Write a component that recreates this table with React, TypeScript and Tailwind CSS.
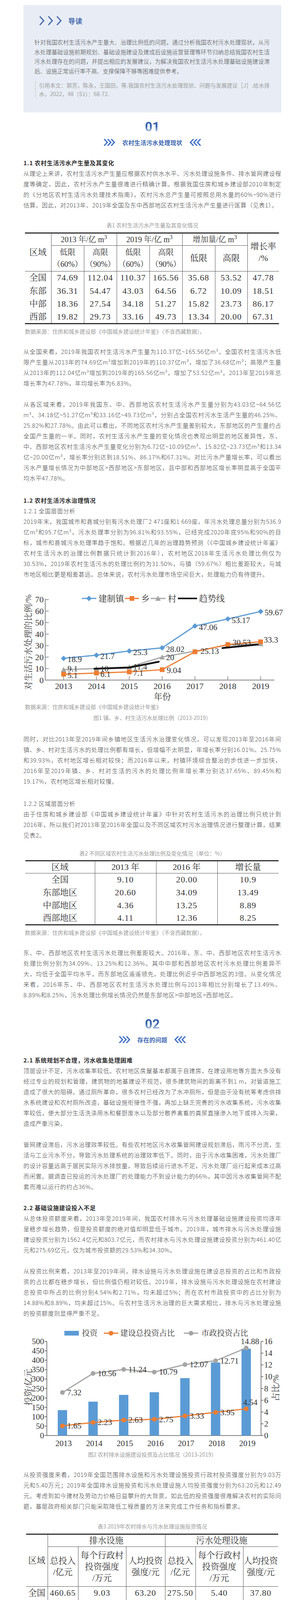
import React from 'react'

const body = "text-justify text-[15px] font-light leading-[27px] tracking-[0.7px] text-[#3f3f3f]"
const serifCls = "font-['Liberation_Serif','Noto_Serif_CJK_SC','Noto_Sans_CJK_SC',serif]"
const tableCls = `table-fixed border-collapse border-y-[3px] border-[#333] text-center text-[22px] leading-[30px] text-[#333] [&_td]:p-0 ${serifCls}`
const SVG_SERIF = "Liberation Serif, Noto Serif CJK SC, Noto Sans CJK SC, serif"
const BLUE = '#5b9bd5'
const ORANGE = '#ed7d31'
const GRAY = '#a5a5a5'
const YEARS = [2013, 2014, 2015, 2016, 2017, 2018, 2019]

function Chev({ left }: { left?: boolean }) {
  return (
    <svg width="32" height="21" viewBox="0 0 32 21" className={left ? 'block -scale-x-100' : 'block'}>
      {[2, 11, 20].map((x) => (
        <polyline key={x} points={`${x},2 ${x + 8},10.5 ${x},19`} fill="none" stroke="#3f6fc6" strokeWidth="3.2" />
      ))}
    </svg>
  )
}

// margins collapse with the paragraph above, so the top gap is set per section
function SectionHead({ num, title, className }: { num: string; title: string; className: string }) {
  return (
    <div className={`flex flex-col items-center ${className}`}>
      <div className="h-[36px] bg-linear-to-b from-[#3461a9] from-45% to-[#dfe7f4] to-95% bg-clip-text font-['Roboto',sans-serif] text-[33px] font-bold leading-[36px] text-transparent">
        {num}
      </div>
      <div className="mt-[11px] flex h-[22px] items-center">
        <Chev />
        <span className="mx-[16px] text-[15px] font-bold tracking-[0.4px] text-[#3d68b0]">{title}</span>
        <Chev left />
      </div>
    </div>
  )
}

function H({ children, className = '' }: { children: React.ReactNode; className?: string }) {
  return <h3 className={`text-[15px] font-bold leading-[27px] tracking-[0.7px] text-[#2f2f2f] ${className}`}>{children}</h3>
}

function P({ children, className = 'mb-[27px]' }: { children: React.ReactNode; className?: string }) {
  return <p className={`${body} ${className}`}>{children}</p>
}

function Caption({ children, className = '' }: { children: React.ReactNode; className?: string }) {
  return <p className={`text-center text-[14px] leading-[22px] text-[#9b9b9b] ${className}`}>{children}</p>
}

function Source({ children, className = '' }: { children: React.ReactNode; className?: string }) {
  return <p className={`ml-[4px] text-[14px] leading-[22px] text-[#9b9b9b] ${className}`}>{children}</p>
}

function Chart1() {
  const X = (i: number) => 163 + 84.17 * i
  const Y = (v: number) => 1741 - v * 2.943
  const town = [18.9, 21.7, 25.3, 28.02, 47.06, 53.17, 59.67]
  const xiang = [5.1, 6.1, 7.1, 9.04, 24.6, 30.9, 33.3]
  const cun = [9.1, 10, 11.4, 20, 25.13, 30.53, 31.5]
  const pts = (a: number[]) => a.map((v, i) => `${X(i)},${Y(v)}`).join(' ')
  const townLab = ['18.9', '21.7', '25.3', '28.02', '47.06', '53.17', '59.67']
  const xiangLab: [string, number, number][] = [['5.1', 10, 3], ['6.1', 10, 3], ['7.1', 10, 3], ['9.04', 12, 2], ['', 0, 0], ['', 0, 0], ['33.3', 8, -5]]
  const cunLab: [string, number, number][] = [['9.1', 10, -2], ['10', 10, 0], ['11.4', 10, 0], ['20', 10, 1], ['25.13', 14, 0], ['30.53', 12, -6], ['', 0, 0]]
  return (
    <svg width="661" height="288" viewBox="60 1510 661 288" className="block overflow-visible" fontFamily={SVG_SERIF} fill="#333">
      <text transform="translate(72,1644) rotate(-90)" textAnchor="middle" dominantBaseline="central" fontSize="22" fill="#404040">
        对生活污水处理的比例/%
      </text>
      {/* legend */}
      <line x1="210" y1="1532" x2="247" y2="1532" stroke={BLUE} strokeWidth="3" />
      <polygon points="228,1525 235,1532 228,1539 221,1532" fill={BLUE} />
      <text x="252" y="1532" dominantBaseline="central" fontSize="22">建制镇</text>
      <line x1="320" y1="1532" x2="356" y2="1532" stroke={ORANGE} strokeWidth="3" />
      <rect x="332" y="1526" width="12" height="12" fill={ORANGE} />
      <text x="362" y="1532" dominantBaseline="central" fontSize="22">乡</text>
      <line x1="386" y1="1532" x2="424" y2="1532" stroke={GRAY} strokeWidth="3" />
      <polygon points="405,1525 412,1538 398,1538" fill={GRAY} />
      <text x="430" y="1532" dominantBaseline="central" fontSize="22">村</text>
      <line x1="456" y1="1532" x2="505" y2="1532" stroke="#111" strokeWidth="4" />
      <text x="510" y="1532" dominantBaseline="central" fontSize="22">趋势线</text>
      {/* axes */}
      <line x1="116" y1="1533" x2="116" y2="1742" stroke="#999" strokeWidth="2.5" />
      <line x1="115" y1="1741" x2="703" y2="1741" stroke="#999" strokeWidth="2.5" />
      {[0, 10, 20, 30, 40, 50, 60, 70].map((v) => (
        <g key={v}>
          <line x1="116" y1={Y(v)} x2="125" y2={Y(v)} stroke="#999" strokeWidth="2" />
          <text x="112" y={Y(v)} textAnchor="end" dominantBaseline="central" fontSize="22">{v}</text>
        </g>
      ))}
      {YEARS.map((y, i) => (
        <g key={y}>
          <line x1={X(i)} y1="1731" x2={X(i)} y2="1741" stroke="#999" strokeWidth="2" />
          <text x={X(i)} y="1756" textAnchor="middle" dominantBaseline="central" fontSize="22">{y}</text>
        </g>
      ))}
      <text x="416" y="1783" textAnchor="middle" dominantBaseline="central" fontSize="22">年份</text>
      {/* series */}
      <polyline points={pts(cun)} fill="none" stroke={GRAY} strokeWidth="3" />
      {cun.map((v, i) => (
        <polygon key={i} points={`${X(i)},${Y(v) - 7} ${X(i) + 7},${Y(v) + 6} ${X(i) - 7},${Y(v) + 6}`} fill={GRAY} />
      ))}
      <polyline points={pts(xiang)} fill="none" stroke={ORANGE} strokeWidth="3" />
      {xiang.map((v, i) => (
        <rect key={i} x={X(i) - 6} y={Y(v) - 6} width="12" height="12" fill={ORANGE} />
      ))}
      <polyline points={pts(town)} fill="none" stroke={BLUE} strokeWidth="3" />
      {town.map((v, i) => (
        <polygon key={i} points={`${X(i)},${Y(v) - 7} ${X(i) + 7},${Y(v)} ${X(i)},${Y(v) + 7} ${X(i) - 7},${Y(v)}`} fill={BLUE} />
      ))}
      <polyline points="242,1712 331,1709 407,1694" fill="none" stroke="#111" strokeWidth="4.5" strokeLinecap="round" />
      <polyline points="570,1659 661,1650" fill="none" stroke="#111" strokeWidth="4.5" strokeLinecap="round" />
      {town.map((v, i) => (
        <text key={i} x={X(i) + 10} y={Y(v) + 3} dominantBaseline="central" fontSize="21">{townLab[i]}</text>
      ))}
      {cun.map((v, i) =>
        cunLab[i][0] ? (
          <text key={i} x={X(i) + cunLab[i][1]} y={Y(v) + cunLab[i][2]} dominantBaseline="central" fontSize="21">{cunLab[i][0]}</text>
        ) : null,
      )}
      {xiang.map((v, i) =>
        xiangLab[i][0] ? (
          <text key={i} x={X(i) + xiangLab[i][1]} y={Y(v) + xiangLab[i][2]} dominantBaseline="central" fontSize="21">{xiangLab[i][0]}</text>
        ) : null,
      )}
    </svg>
  )
}

type BL = {
  top: number
  height: number
  lx: number
  rx: number
  y0: number
  yT: number
  lMax: number
  c0: number
  step: number
  shift: number
  bars: number[]
  gray: number[]
  orange: number[]
  grayDots: boolean
  grayLab: [number, number][]
  orangeLab: [number, number][]
  legendY: number
  lg: { rect: number; t1: number; o: number; t2: number; g: number; t3: number }
  ltitle: [number, number]
  rtitle: [number, number]
  xlabY: number
}

function BarLine(p: BL) {
  const C = (i: number) => p.c0 + p.step * i
  const YL = (v: number) => p.y0 - (v * (p.y0 - p.yT)) / p.lMax
  const YR = (v: number) => p.y0 - (v * (p.y0 - p.yT)) / 16
  const lt: number[] = []
  for (let v = 0; v <= p.lMax; v += 50) lt.push(v)
  const rt = [0, 2, 4, 6, 8, 10, 12, 14, 16]
  const fmt = (v: number) => v.toFixed(2)
  return (
    <svg width="661" height={p.height} viewBox={`60 ${p.top} 661 ${p.height}`} className="block overflow-visible" fontFamily={SVG_SERIF} fill="#333">
      {/* legend */}
      <rect x={p.lg.rect} y={p.legendY - 6} width="37" height="12" fill={BLUE} />
      <text x={p.lg.t1} y={p.legendY} dominantBaseline="central" fontSize="20">投资</text>
      <line x1={p.lg.o} y1={p.legendY} x2={p.lg.o + 37} y2={p.legendY} stroke={ORANGE} strokeWidth="3" />
      <circle cx={p.lg.o + 18.5} cy={p.legendY} r="6" fill={ORANGE} />
      <text x={p.lg.t2} y={p.legendY} dominantBaseline="central" fontSize="20">建设总投资占比</text>
      <line x1={p.lg.g} y1={p.legendY} x2={p.lg.g + 37} y2={p.legendY} stroke={GRAY} strokeWidth="3" />
      <circle cx={p.lg.g + 18.5} cy={p.legendY} r="6" fill={GRAY} />
      <text x={p.lg.t3} y={p.legendY} dominantBaseline="central" fontSize="20">市政投资占比</text>
      {/* axis titles */}
      <text transform={`translate(${p.ltitle[0]},${p.ltitle[1]}) rotate(-90)`} textAnchor="middle" dominantBaseline="central" fontSize="22">投资/亿元</text>
      <text transform={`translate(${p.rtitle[0]},${p.rtitle[1]}) rotate(-90)`} textAnchor="middle" dominantBaseline="central" fontSize="22">占比/%</text>
      {/* axes */}
      <line x1={p.lx} y1={p.yT} x2={p.lx} y2={p.y0} stroke="#555" strokeWidth="1.5" />
      <line x1={p.rx} y1={p.yT} x2={p.rx} y2={p.y0} stroke="#555" strokeWidth="1.5" />
      <line x1={p.lx} y1={p.y0} x2={p.rx} y2={p.y0} stroke="#555" strokeWidth="1.5" />
      {lt.map((v) => (
        <g key={v}>
          <line x1={p.lx - 6} y1={YL(v)} x2={p.lx} y2={YL(v)} stroke="#555" strokeWidth="1.5" />
          <text x={p.lx - 7} y={YL(v)} textAnchor="end" dominantBaseline="central" fontSize="21">{v}</text>
        </g>
      ))}
      {rt.map((v) => (
        <g key={v}>
          <line x1={p.rx} y1={YR(v)} x2={p.rx + 6} y2={YR(v)} stroke="#555" strokeWidth="1.5" />
          <text x={p.rx + 8} y={YR(v)} dominantBaseline="central" fontSize="21">{v}</text>
        </g>
      ))}
      {p.bars.map((v, i) => (
        <rect key={i} x={C(i) - 12} y={YL(v)} width="24" height={p.y0 - YL(v)} fill={BLUE} />
      ))}
      {YEARS.map((y, i) => (
        <text key={y} x={C(i) + p.shift} y={p.xlabY} textAnchor="middle" dominantBaseline="central" fontSize="21">{y}</text>
      ))}
      <polyline points={p.gray.map((v, i) => `${C(i)},${YR(v)}`).join(' ')} fill="none" stroke={GRAY} strokeWidth="3" />
      {p.grayDots && p.gray.map((v, i) => <circle key={i} cx={C(i)} cy={YR(v)} r="6" fill={GRAY} />)}
      <polyline points={p.orange.map((v, i) => `${C(i)},${YR(v)}`).join(' ')} fill="none" stroke={ORANGE} strokeWidth="3" />
      {p.orange.map((v, i) => (
        <circle key={i} cx={C(i)} cy={YR(v)} r="6" fill={ORANGE} />
      ))}
      {p.gray.map((v, i) => (
        <text key={i} x={C(i) + p.grayLab[i][0]} y={YR(v) + p.grayLab[i][1]} dominantBaseline="central" fontSize="21">{fmt(v)}</text>
      ))}
      {p.orange.map((v, i) => (
        <text key={i} x={C(i) + p.orangeLab[i][0]} y={YR(v) + p.orangeLab[i][1]} dominantBaseline="central" fontSize="21">{fmt(v)}</text>
      ))}
    </svg>
  )
}

const td = 'border-l border-[#555]'

function Table1() {
  const rows = [
    ['全国', '74.69', '112.04', '110.37', '165.56', '35.68', '53.52', '47.78'],
    ['东部', '36.31', '54.47', '43.03', '64.56', '6.72', '10.09', '18.51'],
    ['中部', '18.36', '27.54', '34.18', '51.27', '15.82', '23.73', '86.17'],
    ['西部', '19.82', '29.73', '33.16', '49.73', '13.34', '20.00', '67.31'],
  ]
  return (
    <table className={`ml-[4px] mt-[8px] w-[651px] ${tableCls}`}>
      <colgroup>
        <col className="w-[67px]" />
        <col className="w-[84px]" />
        <col className="w-[84px]" />
        <col className="w-[84px]" />
        <col className="w-[84px]" />
        <col className="w-[84px]" />
        <col className="w-[83px]" />
        <col className="w-[81px]" />
      </colgroup>
      <tbody>
        <tr className="h-[32px]">
          <td rowSpan={2} className="border-b border-[#555]">区域</td>
          <td colSpan={2} className={`${td} border-b text-[20px]`}>2013 年/亿 m<sup>3</sup></td>
          <td colSpan={2} className={`${td} border-b text-[20px]`}>2019 年/亿 m<sup>3</sup></td>
          <td colSpan={2} className={`${td} border-b text-[20px]`}>增加量/亿 m<sup>3</sup></td>
          <td rowSpan={2} className={`${td} border-b`}>增长率<br />/%</td>
        </tr>
        <tr className="h-[66px] text-[20px]">
          <td className={`${td} border-b`}>低限<br />（60%）</td>
          <td className={`${td} border-b`}>高限<br />（90%）</td>
          <td className={`${td} border-b`}>低限<br />（60%）</td>
          <td className={`${td} border-b`}>高限<br />（90%）</td>
          <td className={`${td} border-b text-[22px]`}>低限</td>
          <td className={`${td} border-b text-[22px]`}>高限</td>
        </tr>
        {rows.map((r) => (
          <tr key={r[0]} className="h-[33.5px]">
            {r.map((c, i) => (
              <td key={i} className={i ? `${td} tracking-[1px]` : ''}>{c}</td>
            ))}
          </tr>
        ))}
      </tbody>
    </table>
  )
}

function Table2() {
  const rows = [
    ['全国', '9.10', '20.00', '10.9'],
    ['东部地区', '20.60', '34.09', '13.49'],
    ['中部地区', '4.36', '13.25', '8.89'],
    ['西部地区', '4.11', '12.36', '8.25'],
  ]
  return (
    <table className={`ml-[5px] mt-[7px] w-[649px] ${tableCls}`}>
      <colgroup>
        <col className="w-[178px]" />
        <col className="w-[157px]" />
        <col className="w-[157px]" />
        <col className="w-[157px]" />
      </colgroup>
      <tbody>
        <tr className="h-[32px]">
          <td className="border-b border-[#555]">区域</td>
          <td className={`${td} border-b`}>2013 年</td>
          <td className={`${td} border-b`}>2016 年</td>
          <td className={`${td} border-b`}>增长量</td>
        </tr>
        {rows.map((r) => (
          <tr key={r[0]} className="h-[33px]">
            {r.map((c, i) => (
              <td key={i} className={i ? `${td} tracking-[1px]` : ''}>{c}</td>
            ))}
          </tr>
        ))}
      </tbody>
    </table>
  )
}

function Table3() {
  const rows = [
    ['全国', '460.65', '9.03', '63.20', '275.50', '5.40', '37.80'],
    ['东部', '277.05', '14.25', '112.25', '187.61', '9.65', '76.02'],
    ['中部', '92.62', '5.74', '37.67', '43.73', '2.71', '17.78'],
    ['西部', '88.71', '5.82', '37.68', '43.93', '2.88', '18.66'],
  ]
  const hd = `${td} border-b leading-[29px]`
  return (
    <table className={`ml-[7px] mt-[8px] w-[646px] ${tableCls}`}>
      <colgroup>
        <col className="w-[55px]" />
        <col className="w-[78px]" />
        <col className="w-[123px]" />
        <col className="w-[100px]" />
        <col className="w-[78px]" />
        <col className="w-[122px]" />
        <col className="w-[90px]" />
      </colgroup>
      <tbody>
        <tr className="h-[31px]">
          <td rowSpan={2} className="border-b border-[#555]">区域</td>
          <td colSpan={3} className={`${td} border-b`}>排水设施</td>
          <td colSpan={3} className={`${td} border-b`}>污水处理设施</td>
        </tr>
        <tr className="h-[102px]">
          <td className={hd}>总投入<br />/亿元</td>
          <td className={hd}>每个行政村<br />投资强度<br />/万元</td>
          <td className={hd}>人均投资<br />强度/元</td>
          <td className={hd}>总投入<br />/亿元</td>
          <td className={hd}>每个行政村<br />投资强度<br />/万元</td>
          <td className={hd}>人均投资<br />强度/元</td>
        </tr>
        {rows.map((r) => (
          <tr key={r[0]} className="h-[33.3px]">
            {r.map((c, i) => (
              <td key={i} className={i ? `${td} tracking-[1px]` : ''}>{c}</td>
            ))}
          </tr>
        ))}
      </tbody>
    </table>
  )
}

const T = {
  p11: '从理论上来讲，农村生活污水产生量应根据农村供水水平、污水处理设施条件、排水管网建设程度等确定，因此，农村污水产生量很难进行精确计算。根据我国住房和城乡建设部2010年制定的《分地区农村生活污水处理技术指南》，农村污水总产生量可按照总用水量的60%~90%进行估算。因此，对2013年、2019年全国及东中西部地区农村生活污水产生量进行匡算（见表1）。',
  p12: '从全国来看，2019年我国农村生活污水产生量为110.37亿~165.56亿m³。全国农村生活污水低限产生量从2013年的74.69亿m³增加到2019年的110.37亿m³，增加了36.68亿m³；高限产生量从2013年的112.04亿m³增加到2019年的165.56亿m³，增加了53.52亿m³。2013年至2019年总增长率为47.78%，年均增长率为6.83%。',
  p13: '从各区域来看，2019年我国东、中、西部地区农村生活污水产生量分别为43.03亿~64.56亿m³、34.18亿~51.27亿m³和33.16亿~49.73亿m³，分别占全国农村污水生活产生量的46.25%、25.82%和27.78%。由此可以看出，不同地区农村污水产生量差别较大，东部地区的产生量约占全国产生量的一半。同时，农村生活污水产生量的变化情况也表现出明显的地区差异性，东、中、西部地区农村生活污水产生量变化分别为6.72亿~10.09亿m³、15.82亿~23.73亿m³和13.34亿~20.00亿m³，增长率分别达到18.51%、86.17%和67.31%。对比污水产量增长率，可以看出污水产量增长情况为中部地区>西部地区>东部地区，且中部和西部地区增长率明显高于全国平均水平47.78%。',
  p14: '2019年末，我国城市和县城分别有污水处理厂2 471座和1 669座，年污水处理总量分别为536.9亿m³和95.7亿m³，污水处理率分别为96.81%和93.55%，已经完成2020年底95%和90%的目标，城市和县城污水处理率趋于饱和。根据近几年的治理趋势预测（《中国城乡建设统计年鉴》农村生活污水的治理比例数据只统计到2016年），农村地区2018年生活污水处理比例仅为30.53%，2019年农村生活污水的处理比例约为31.50%，与镇（59.67%）相比差距较大，与城市地区相比更是相差甚远。总体来说，农村污水处理市场空间巨大，处理能力仍有待提升。',
  p15: '同时，对比2013年至2019年间乡镇地区生活污水治理变化情况，可以发现2013年至2016年间镇、乡、村对生活污水的处理比例都有增长，但增幅不太明显，年增长率分别16.01%、25.75%和39.93%，农村地区增长相对较快；而2016年以来，村镇环境综合整治的步伐进一步加快，2016年至2019年镇、乡、村对生活的污水的处理比例年增长率分别达37.65%、89.45%和19.17%，农村地区增长相对较慢。',
  p16: '由于住房和城乡建设部《中国城乡建设统计年鉴》中针对农村生活污水的治理比例只统计到2016年，所以我们对2013年至2016年全国以及不同区域农村污水治理情况进行整理计算，结果见表2。',
  p17: '东、中、西部地区农村生活污水处理比例差距较大。2016年，东、中、西部地区农村生活污水处理比例分别为34.09%、13.25%和12.36%。其中中部和西部地区农村污水处理比例差异不大，均低于全国平均水平，而东部地区遥遥领先，处理比例近乎中西部地区的3倍。从变化情况来看，2016年东、中、西部地区农村生活污水处理比例与2013年相比分别增长了13.49%、8.89%和8.25%，污水处理比例增长情况仍然是东部地区>中部地区>西部地区。',
  p21: '顶层设计不足，污水收集率较低。农村地区房屋基本都属于自建房，在建设用地等方面大多没有经过专业的规划和管理，建筑物的地基建设不规范，很多建筑物间的距离不到1 m，对管道施工造成了很大的阻碍。通过厕所革命，很多农村已经改为了水冲厕所，但是由于没有统筹考虑供排水系统建设和农村厕所改造，基础设施衔接性不强，再加上缺乏完善的污水收集系统，污水收集率较低，使大部分生活洗涤用水和餐厨废水以及部分散养禽畜的粪尿直接渗入地下或排入沟渠，造成严重污染。',
  p22: '管网建设滞后，污水治理效率较低。有些农村地区污水收集管网建设规划滞后，雨污不分流，生活与工业污水不分，导致污水处理系统的治理效率低下。同时，由于污水收集困难，污水处理厂的设计容量远高于居民实际污水排放量，导致后续运行进水不足，污水处理厂运行起来成本过高而闲置。据调查已投运的污水处理厂的处理能力不到设计能力的66%，其中因污水收集管网不配套而难以运行的约占36%。',
  p23: '从总体投资额度来看，2013年至2019年间，我国农村排水与污水处理基础设施建设投资均逐年呈稳步增长趋势，但是投资额度的绝对值却明显低于城市。2019年，城市排水与污水处理设施建设投资分别为1562.4亿元和803.7亿元，而农村排水与污水处理设施建设投资分别为461.40亿元和275.69亿元，仅为城市投资额的29.53%和34.30%。',
  p24: '从投资比例来看，2013年至2019年间，排水设施与污水处理设施在建设总投资的占比和市政投资的占比都在稳步增长，但比例值仍相对较低。2019年，排水设施与污水处理设施在农村建设总投资中所占的比例分别4.54%和2.71%，均未超过5%；而在农村市政投资中的占比分别为14.88%和8.89%，均未超过15%。与农村生活污水治理的巨大需求相比，排水与污水处理设施的投资额度则显得严重不足。',
  p25: '从投资强度来看，2019年全国范围排水设施和污水处理设施投资行政村投资强度分别为9.03万元和5.40万元；2019年全国排水设施投资和污水处理设施人均投资强度分别为63.20元和12.49元。考虑到如今建材及劳动力价格日益攀升的大背景，如此低的投资强度很难解决农村的实际问题，基层政府相关部门只能采取降低工程质量的方法来完成工作任务和指标要求。',
  p26: '我国农村排水与污水处理基础设施的建设资金主要来源于国家和地方财政支持，而运营维护资金多以地方财政自筹为主。许多地区在政府出资建设基础设施后，由于农村难以承担运行维护费用，导致很多农村地区出现“建得起、运行不起”的尴尬局面，污水处理设施逐渐被停用。考虑农村的经济发展水平，缺乏专业的运营管理队伍，管理水平总体偏低，再加上缺乏科学合理的管护机制，导致农村污水设施不能很好的发挥其效能。',
  p27: '同时，目前涉及农村污水治理的行政机构分散，且职能交叉现象严重，造成监管职责不明确，监管难度增大。如杭州的“百村示范、千村整治”工程由农村农业部门牵头、“1250”工程由生态环境局牵头、“百万农户生活污水净化沼气工程”则由能源办负责。',
  p31: '统筹规划，征集并协调各方意见。规划前，要根据农村的人居环境条件，将农村污水处理项目化整为零，在综合考虑生态保护、环境治理、资源利用、乡村振兴、区域发展的基础上，统筹考虑农村总体布局、供排水系统建设和农村厕所改造等，合理规划建设改造方案。同时，在制定农村污水治理规划时，要组织多个主体的共同参与规划编制工作，政府、村民和企业共同协商，充分采集当地农村居民和各个主体的意见。',
  p32: '加强专家帮扶指导，以县为单位统一规划。通过专家的调研指导，摸清地方农村生活污水处理现状与问题，科学确定收集和处理方式，以县为单位编制科学合理、因地制宜的规划方案，实现统一规划、统一建设、统一管理，弥补各地在农村生活污水治理项目布局、技术选取及治理衔接性等方面的不足。',
  p33: '完善修复现有污水收集系统。以充分利用现有管网为原则，综合考虑排水体制和管网布局合理性、管网建设匹配度、运行管护规范化、经济可承受能力等，判断是否需要改造。对管网不足、错接、混接、漏接的，完善污水收集系统建设，提高污水收集率；对雨水混入管网造成进水浓度长期较低的，开展雨污分流改造；对管网老旧、破损、堵塞的，开展管网修复。',
  p34: '完善政府资金投入机制。在综合考虑各项资金投入的前提下，完善本级配套资金，制定具体的奖补办法，加快资金拨付进度。例如，可以有效整合涉及农业农村、人居环境整治、美丽乡村建设等项目资金，针对农村生活污水治理建立专项基金，完善“中央补贴、地方筹资、有偿使用”的政府资金投入机制，建立资金保障体系。',
  p35: '多渠道筹集社会资本。针对作为社会资本的企业能力不足以及面对农村污水治理项目动力不强的问题，强化社会资本投入激励机制，可以通过农村“污水治理”的示范工程，给予相关企业资金及政策等方面的支持，或通过区域项目的捆绑，将农村建设中公路、厕改及后续管理等多个项目打包，形成有收益的复合项目，来吸引企业的进入。另外，通过部分环保组织捐建、公益基金投入、在外创业成功人士主动回报家乡等形式，充分吸引社会力量筹集资金。同时，可以引导有条件的地区将农村污水处理基础设施建设与特色产业、休闲农业、乡村旅游等有机结合，实现农村产业融合发展与人居环境整治互促互进。',
  p36: '细化资金分配与管理。根据不同地区的发展需求，细化不同区域、不同类型农村生活污水治理的目标和要求，对开展农村污水治理各环节所需要的资金进行科学核算，确保资金投入能够实现预期成效。在农村污水设施建设改造过程中可以积极尝试实践代建制，充分利用市场资金，细化资金的分配与管理，后期管护部分投放市场，营造企业产品、运作和提高研发效率的良性产业链。',
  p37: '科学合理选择管理模式。选择管理模式要因地制宜，综合考虑多种因素，其中最重要的是经济因素。对于经济条件较好的地区，可采用以政府监管、社会参与服务的市场化运营模式，委托第三方公司来保障设施的专业化管理；对于经济条件不好的地区，可采用村民自主管理为主，政府协助管理的逐级管理模式或者财政出资村管理模式。同时，为了既费时费力，又保证管理运维效果，可借助互联网的发展，尝试建立无人值守的污水处理运营体系和智能化监管平台。',
  p38: '建立完善相关机制。完善多元化全过程监管机制，加强对农村生活污水治理规划、建设、施工验收和后期运维管理等的全过程监管，建立一种以政府执法为主，农村居民、社会参与的多元化农村污水治理监管机制，实现全国农村生活污水治理项目在线评估、监管举报、问题咨询和即时反馈等功能；健全基础设施管护长效机制，政府从运营、管理、制度、监督等方面完善相关制度和管理办法，例如：设立管理奖项、村民适当付费机制、技术专人负责定期检查维修等；建立职责明确化的多部门合作机制，通过调整环保、财政、生态等配套政策和制定责任清单，确保政策衔接顺畅并明确各部门的任务与职责，加强各个部门之间的有效沟通联',
}

const SRC = '数据来源：住房和城乡建设部《中国城乡建设统计年鉴》（不含西藏数据）。'

export default function App() {
  return (
    <div className="w-full bg-white pt-[13px] font-['Noto_Sans_CJK_SC','Noto_Sans',sans-serif]">
      <div className="ml-[60px] w-[661px]">
        {/* intro */}
        <div className="bg-[#e8edf5] pb-[37px] pl-[28px] pr-[30px] pt-[27px]">
          <div className="flex h-[26px] items-center gap-[12px] pl-[11px]">
            <svg width="64" height="24" viewBox="0 0 64 24" className="block">
              {[3, 25, 47].map((x) => (
                <polyline key={x} points={`${x},1 ${x + 10},12 ${x},23`} fill="none" stroke="#4366ab" strokeWidth="3" />
              ))}
            </svg>
            <span className="text-[18px] font-bold text-[#4569ad]">导读</span>
          </div>
          <p className="mt-[30px] text-justify text-[14.6px] font-light leading-[24.7px] text-[#4a4a4a]">
            针对我国农村生活污水产生量大、治理比例低的问题，通过分析我国农村污水处理现状，从污水处理基础设施前期规划、基础设施建设及建成后设施运营管理等环节归纳总结我国农村生活污水处理存在的问题，并提出相应的发展建议，为解决我国农村生活污水处理基础设施建设滞后、设施正常运行率不高、支撑保障不够等困难提供参考。
          </p>
          <div className="ml-[2px] mt-[12px] border-l-2 border-[#d6d9de] pl-[8px]">
            <p className="text-justify text-[14px] leading-[22px] text-[#9c9c9c]">
              引用本文：郭芳，陈永，王国田，等.我国农村生活污水处理现状、问题与发展建议［J］.给水排水，2022，48（S1）：68-72.
            </p>
          </div>
        </div>

        <SectionHead num="01" title="农村生活污水处理现状" className="mt-[19px]" />
        <H className="mt-[27px]">1.1 农村生活污水产生量及其变化</H>
        <P>{T.p11}</P>
        <Caption>表1 农村生活污水产生量及其变化情况</Caption>
        <Table1 />
        <Source className="mb-[27px] mt-[7px]">{SRC}</Source>
        <P>{T.p12}</P>
        <P className="mb-[30px]">{T.p13}</P>
        <H>1.2 农村生活污水治理情况</H>
        <p className={body}>1.2.1 全国层面分析</p>
        <P>{T.p14}</P>
        <Chart1 />
        <Source>数据来源：住房和城乡建设部《中国城乡建设统计年鉴》</Source>
        <Caption className="mb-[30px] mt-[6px]">图1 镇、乡、村生活污水处理比例（2013-2019）</Caption>
        <P className="mb-[30px]">{T.p15}</P>
        <p className={body}>1.2.2 区域层面分析</p>
        <P className="mb-[22px]">{T.p16}</P>
        <Caption>表2 不同区域农村生活污水处理比例及变化情况（单位：%）</Caption>
        <Table2 />
        <Source className="mb-[27px] mt-[7px]">{SRC}</Source>
        <P>{T.p17}</P>

        <SectionHead num="02" title="存在的问题" className="mt-[44px]" />
        <H className="mt-[27px]">2.1 系统规划不合理，污水收集处理困难</H>
        <P>{T.p21}</P>
        <P>{T.p22}</P>
        <H>2.2 基础设施建设投入不足</H>
        <P>{T.p23}</P>
        <P>{T.p24}</P>
        <BarLine
          top={3404}
          height={306}
          lx={120}
          rx={669}
          y0={3677}
          yT={3436}
          lMax={500}
          c0={160}
          step={78.5}
          shift={3}
          bars={[135, 180, 216, 230, 305, 388, 461]}
          gray={[7.32, 10.56, 11.24, 10.79, 12.07, 12.71, 14.88]}
          orange={[1.65, 2.23, 2.63, 2.75, 3.33, 3.95, 4.54]}
          grayDots
          grayLab={[[12, 0], [12, 0], [12, 0], [12, 0], [12, 0], [12, 0], [-14, -17]]}
          orangeLab={[[12, 0], [12, 0], [12, 0], [12, 0], [12, 0], [12, 0], [-8, -17]]}
          legendY={3415}
          lg={{ rect: 165, t1: 210, o: 266, t2: 308, g: 471, t3: 516 }}
          ltitle={[72, 3553]}
          rtitle={[706, 3555]}
          xlabY={3697}
        />
        <Caption className="mb-[27px] mt-[4px]">图2 农村排水设施建设投资及占比情况（2013-2019）</Caption>
        <P>{T.p25}</P>
        <Caption>表3 2019年农村排水与污水处理设施投资情况</Caption>
        <Table3 />
        <Source className="mb-[27px] mt-[7px]">{SRC}</Source>
        <BarLine
          top={4253}
          height={290}
          lx={118}
          rx={671}
          y0={4509}
          yT={4276}
          lMax={300}
          c0={157}
          step={79}
          shift={2}
          bars={[31, 63, 93, 98, 143, 226, 275.5]}
          gray={[1.76, 3.74, 4.88, 4.66, 5.7, 7.41, 8.89]}
          orange={[0.4, 0.79, 1.14, 1.19, 1.57, 2.3, 2.71]}
          grayDots={false}
          grayLab={[[14, 0], [14, 0], [14, 0], [14, 0], [14, 0], [14, 0], [-14, -17]]}
          orangeLab={[[14, 0], [14, 0], [14, 0], [14, 0], [14, 0], [14, 0], [8, 0]]}
          legendY={4265}
          lg={{ rect: 157, t1: 200, o: 274, t2: 318, g: 481, t3: 526 }}
          ltitle={[72, 4395]}
          rtitle={[708, 4391]}
          xlabY={4527}
        />
        <Caption className="mb-[27px]">图3 农村污水处理设施建设投资及占比情况（2013-2019）</Caption>
        <H>2.3 后期运营管理质量不理想</H>
        <P>{T.p26}</P>
        <P>{T.p27}</P>

        <SectionHead num="03" title="发展建议" className="mt-[43px]" />
        <H className="mt-[27px]">3.1 强化因地制宜和顶层设计，保障规划科学合理</H>
        <P>{T.p31}</P>
        <P>{T.p32}</P>
        <P>{T.p33}</P>
        <H>3.2 强化投入和激励机制，保障资金来源和管理</H>
        <P>{T.p34}</P>
        <P>{T.p35}</P>
        <P>{T.p36}</P>
        <H>3.3 合理选择管理模式，完善相关机制</H>
        <P>{T.p37}</P>
        <P>{T.p38}</P>
        <p className="text-justify text-[13.6px] font-bold leading-[24px] text-[#3a8ee6]">
          微信对原文有修改。原文标题：我国农村生活污水处理现状、问题与发展建议；作者：郭芳、陈永、王国田、张文慧；作者单位：亚太建设科技信息研究院有限公司。刊登在《给水排水》2022年第S1期。
        </p>
      </div>
    </div>
  )
}
